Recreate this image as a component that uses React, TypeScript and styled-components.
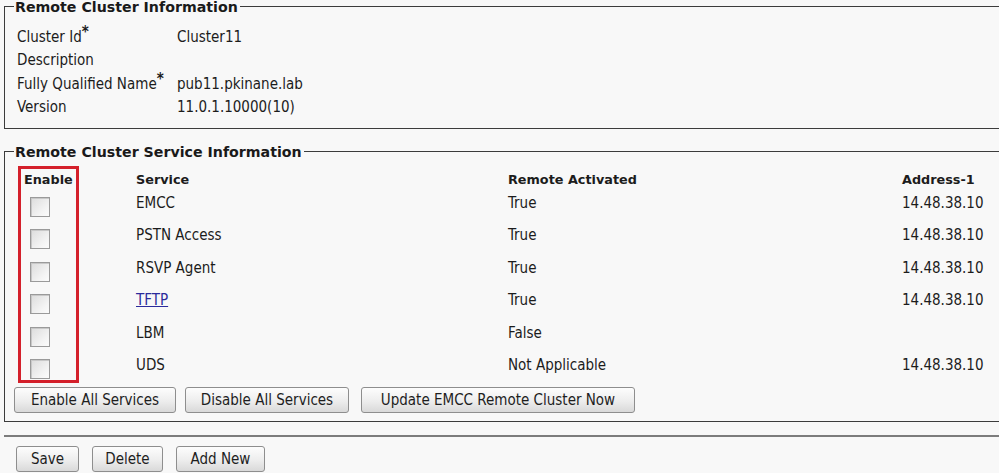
import React from 'react'
import styled, { createGlobalStyle } from 'styled-components'

const GlobalStyle = createGlobalStyle`
  html, body {
    margin: 0;
    padding: 0;
    background: #f8f8f8;
  }
  body {
    font-family: 'DejaVu Sans Condensed', 'DejaVu Sans', 'Liberation Sans', sans-serif;
    color: #1c1c1c;
    overflow: hidden;
  }
`

const boldFont = `'DejaVu Sans', 'Liberation Sans', sans-serif`

interface ServiceRow {
  name: string
  link?: boolean
  activated: string
  address: string
}

const services: ServiceRow[] = [
  { name: 'EMCC', activated: 'True', address: '14.48.38.10' },
  { name: 'PSTN Access', activated: 'True', address: '14.48.38.10' },
  { name: 'RSVP Agent', activated: 'True', address: '14.48.38.10' },
  { name: 'TFTP', link: true, activated: 'True', address: '14.48.38.10' },
  { name: 'LBM', activated: 'False', address: '' },
  { name: 'UDS', activated: 'Not Applicable', address: '14.48.38.10' },
]

const App = () => {
  return (
    <Page>
      <GlobalStyle />
      <InfoFieldset>
        <Legend>Remote Cluster Information</Legend>
        <InfoGrid>
          <Label>
            Cluster Id<Req>*</Req>
          </Label>
          <Value>Cluster11</Value>
          <Label>Description</Label>
          <Value />
          <Label>
            Fully Qualified Name<Req>*</Req>
          </Label>
          <Value>pub11.pkinane.lab</Value>
          <Label>Version</Label>
          <Value>11.0.1.10000(10)</Value>
        </InfoGrid>
      </InfoFieldset>

      <ServiceFieldset>
        <Legend>Remote Cluster Service Information</Legend>
        {/* annotation drawn over the Enable column */}
        <Highlight />
        <ServiceBody>
          <HeaderRow>
            <HeadCell $pad={10}>Enable</HeadCell>
            <HeadCell>Service</HeadCell>
            <HeadCell>Remote Activated</HeadCell>
            <HeadCell>Address-1</HeadCell>
          </HeaderRow>
          {services.map((s) => (
            <Row key={s.name}>
              <CheckCell>
                <Check />
              </CheckCell>
              <Cell>{s.link ? <ServiceLink href="#">{s.name}</ServiceLink> : s.name}</Cell>
              <Cell>{s.activated}</Cell>
              <Cell>{s.address}</Cell>
            </Row>
          ))}
          <ButtonBar $gap={[9, 12]}>
            <Button $w={162}>Enable All Services</Button>
            <Button $w={164}>Disable All Services</Button>
            <Button $w={274}>Update EMCC Remote Cluster Now</Button>
          </ButtonBar>
        </ServiceBody>
      </ServiceFieldset>

      <Separator />

      <FooterBar>
        <Button $w={63}>Save</Button>
        <Button $w={71}>Delete</Button>
        <Button $w={89}>Add New</Button>
      </FooterBar>
    </Page>
  )
}

export default App

const Page = styled.div`
  width: 995px;
  padding: 0 0 0 4px;
`

const Fieldset = styled.fieldset`
  position: relative;
  margin: 0;
  min-width: 0;
  border: 1.5px solid #3c3c3c;
  border-right: none;
  padding: 0;
`

const Legend = styled.legend`
  margin-left: 9px;
  padding: 2px 2px 0 1px;
  font-family: ${boldFont};
  font-size: 14.2px;
  font-weight: bold;
  line-height: 11px;
  color: #1a1a1a;
`

const InfoFieldset = styled(Fieldset)`
  padding: 12px 0 9px 0;
`

const InfoGrid = styled.div`
  display: grid;
  grid-template-columns: 160px 1fr;
  grid-auto-rows: 23.5px;
  align-items: center;
  padding-left: 12px;
  font-size: 15px;
`

const Label = styled.div`
  white-space: nowrap;
`

const Value = styled.div``

const Req = styled.sup`
  font-size: 15px;
  font-weight: bold;
  line-height: 0;
  vertical-align: 5px;
`

const ServiceFieldset = styled(Fieldset)`
  margin-top: 16px;
  padding: 8px 0 8px 0;
`

const ServiceBody = styled.div`
  padding-left: 9px;
`

const Highlight = styled.div`
  position: absolute;
  left: 13px;
  top: 8px;
  width: 55px;
  height: 211px;
  border: 3px solid #d4202b;
  pointer-events: none;
`

const columns = '122px 372px 394px 1fr'

const HeaderRow = styled.div`
  display: grid;
  grid-template-columns: ${columns};
  height: 27px;
  align-items: center;
`

const HeadCell = styled.div<{ $pad?: number }>`
  padding-left: ${(p) => p.$pad ?? 0}px;
  font-family: ${boldFont};
  font-size: 12.8px;
  font-weight: bold;
`

const Row = styled.div`
  display: grid;
  grid-template-columns: ${columns};
  height: 32.4px;
  align-items: start;
  font-size: 15px;
  line-height: 20px;
`

const Cell = styled.div`
  white-space: nowrap;
`

const CheckCell = styled.div`
  padding: 4px 0 0 16px;
`

const Check = styled.span`
  display: block;
  width: 18px;
  height: 18px;
  border: 1px solid #9a9a9a;
  background: linear-gradient(135deg, #dcdcdc 0%, #f4f4f4 70%, #fbfbfb 100%);
  box-shadow: inset 1px 1px 0 #c8c8c8;
`

const ServiceLink = styled.a`
  color: #2b2b9c;
  text-decoration: underline;
`

const ButtonBar = styled.div<{ $gap: number[] }>`
  display: flex;
  & > *:nth-child(2) {
    margin-left: ${(p) => p.$gap[0]}px;
  }
  & > *:nth-child(3) {
    margin-left: ${(p) => p.$gap[1]}px;
  }
`

const Button = styled.button<{ $w: number }>`
  width: ${(p) => p.$w}px;
  height: 26px;
  padding: 0;
  border: 1px solid #8e8e8e;
  border-radius: 3px;
  background: linear-gradient(#fdfdfd 0%, #ededed 55%, #d9d9d9 100%);
  font-family: inherit;
  font-size: 15px;
  color: #1e1e1e;
  white-space: nowrap;
`

const Separator = styled.div`
  margin-top: 13px;
  height: 1.5px;
  background: #7c7c7c;
`

const FooterBar = styled.div`
  display: flex;
  gap: 13px;
  margin: 9px 0 0 12px;
`
